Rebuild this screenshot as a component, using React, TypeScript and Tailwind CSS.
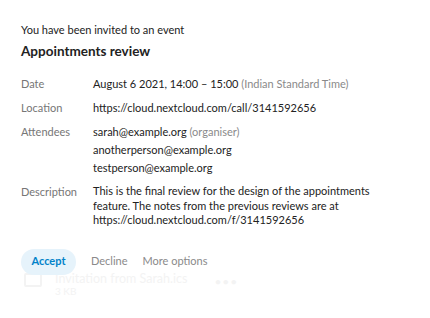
import React from "react";

const rows = [
  { label: "Date", key: "date" },
  { label: "Location", key: "location" },
  { label: "Attendees", key: "attendees" },
  { label: "Description", key: "description" },
];

export default function App() {
  return (
    <div className="w-[430px] h-[318px] bg-white text-[#222] font-['Lato',sans-serif] px-[21px] pt-[22px]">
      <p className="text-[11px] leading-[16px]">You have been invited to an event</p>
      <h1 className="text-[13.5px] leading-[18px] font-bold mt-[4px]">Appointments review</h1>

      {/* Event details */}
      <div className="mt-[15px] flex flex-col gap-[6px] text-[11px]">
        {rows.map((r) => (
          <div key={r.key} className="flex">
            <div className="w-[72px] shrink-0 text-[#767676] leading-[18px]">{r.label}</div>
            <div className="flex-1">
              {r.key === "date" && (
                <div className="leading-[18px]">
                  August 6 2021, 14:00 – 15:00 <span className="text-[#8a8a8a]">(Indian Standard Time)</span>
                </div>
              )}
              {r.key === "location" && (
                <div className="leading-[18px]">https://cloud.nextcloud.com/call/3141592656</div>
              )}
              {r.key === "attendees" && (
                <div className="leading-[18px]">
                  <div>
                    sarah@example.org <span className="text-[#8a8a8a]">(organiser)</span>
                  </div>
                  <div>anotherperson@example.org</div>
                  <div>testperson@example.org</div>
                </div>
              )}
              {r.key === "description" && (
                <div className="leading-[14.5px] pt-[1px] w-[290px]">
                  This is the final review for the design of the appointments feature. The notes from the previous
                  reviews are at https://cloud.nextcloud.com/f/3141592656
                </div>
              )}
            </div>
          </div>
        ))}
      </div>

      {/* Actions, over the faded attachment row */}
      <div className="relative mt-[21px]">
        <div className="absolute left-[3px] top-[22px] flex items-start gap-[13px] text-[#f3f3f3]">
          <div className="w-[18px] h-[14px] border-2 border-[#f3f3f3] rounded-[2px] mt-[2px]" />
          <div className="flex flex-col">
            <span className="text-[12.5px] leading-[15px]">Invitation from Sarah.ics</span>
            <span className="text-[10px] leading-[11px]">3 KB</span>
          </div>
          <span className="ml-[14px] mt-[6px] text-[12px] leading-[10px] tracking-[1px]">•••</span>
        </div>
        <div className="relative z-10 flex items-center text-[11px]">
          <button className="h-[26px] w-[55px] rounded-full bg-[#e6f3fb] text-[#0082c9] font-bold">Accept</button>
          <button className="ml-[15px] text-[#8a8a8a]">Decline</button>
          <button className="ml-[15px] text-[#8a8a8a]">More options</button>
        </div>
      </div>
    </div>
  );
}
